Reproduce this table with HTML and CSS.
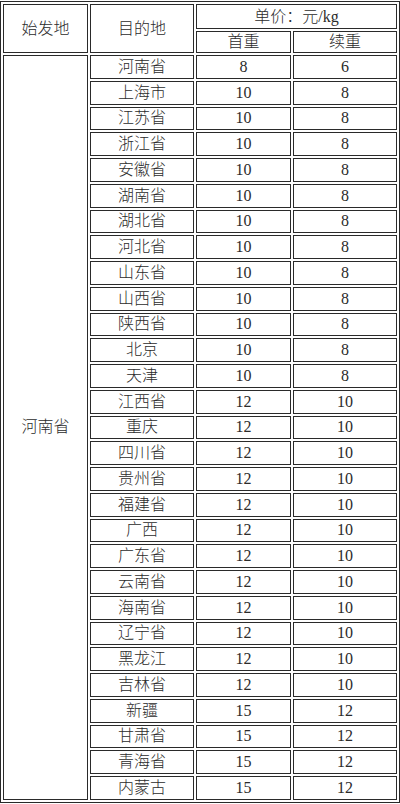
FILE: index.html
```html
<!DOCTYPE html>
<html lang="zh">
<head>
<meta charset="utf-8">
<link rel="stylesheet" href="styles.css">
</head>
<body>
<table class="rates">
  <colgroup>
    <col class="c1"><col class="c2"><col class="c3"><col class="c4">
  </colgroup>
  <tr class="h1">
    <td rowspan="2">始发地</td>
    <td rowspan="2">目的地</td>
    <td colspan="2">单价：元/kg</td>
  </tr>
  <tr class="h2">
    <td>首重</td>
    <td>续重</td>
  </tr>
  <tr><td rowspan="29">河南省</td><td>河南省</td><td>8</td><td>6</td></tr>
  <tr><td>上海市</td><td>10</td><td>8</td></tr>
  <tr><td>江苏省</td><td>10</td><td>8</td></tr>
  <tr><td>浙江省</td><td>10</td><td>8</td></tr>
  <tr><td>安徽省</td><td>10</td><td>8</td></tr>
  <tr><td>湖南省</td><td>10</td><td>8</td></tr>
  <tr><td>湖北省</td><td>10</td><td>8</td></tr>
  <tr><td>河北省</td><td>10</td><td>8</td></tr>
  <tr><td>山东省</td><td>10</td><td>8</td></tr>
  <tr><td>山西省</td><td>10</td><td>8</td></tr>
  <tr><td>陕西省</td><td>10</td><td>8</td></tr>
  <tr><td>北京</td><td>10</td><td>8</td></tr>
  <tr><td>天津</td><td>10</td><td>8</td></tr>
  <tr><td>江西省</td><td>12</td><td>10</td></tr>
  <tr><td>重庆</td><td>12</td><td>10</td></tr>
  <tr><td>四川省</td><td>12</td><td>10</td></tr>
  <tr><td>贵州省</td><td>12</td><td>10</td></tr>
  <tr><td>福建省</td><td>12</td><td>10</td></tr>
  <tr><td>广西</td><td>12</td><td>10</td></tr>
  <tr><td>广东省</td><td>12</td><td>10</td></tr>
  <tr><td>云南省</td><td>12</td><td>10</td></tr>
  <tr><td>海南省</td><td>12</td><td>10</td></tr>
  <tr><td>辽宁省</td><td>12</td><td>10</td></tr>
  <tr><td>黑龙江</td><td>12</td><td>10</td></tr>
  <tr><td>吉林省</td><td>12</td><td>10</td></tr>
  <tr><td>新疆</td><td>15</td><td>12</td></tr>
  <tr><td>甘肃省</td><td>15</td><td>12</td></tr>
  <tr><td>青海省</td><td>15</td><td>12</td></tr>
  <tr><td>内蒙古</td><td>15</td><td>12</td></tr>
</table>
</body>
</html>
```

FILE: styles.css
```css
html, body {
  margin: 0;
  padding: 0;
  background: #ffffff;
}
body {
  padding-top: 1px;
}
.rates {
  width: 400px;
  table-layout: fixed;
  border-collapse: separate;
  border-spacing: 2px;
  border: 1px solid #2a2a2a;
  font-family: "Liberation Serif", "Noto Sans CJK SC", serif;
  font-size: 16px;
  font-weight: 300;
  color: #2b2b2b;
}
.c1 { width: 85px; }
.c2 { width: 104px; }
.c3 { width: 95px; }
.c4 { width: 104px; }
.rates td {
  box-sizing: border-box;
  border: 1px solid #2a2a2a;
  padding: 0;
  height: 23.75px;
  text-align: center;
  vertical-align: middle;
  line-height: 18px;
  white-space: nowrap;
}
.rates .h1 td {
  height: 25px;
}
.rates .h2 td {
  height: 22px;
}
```
